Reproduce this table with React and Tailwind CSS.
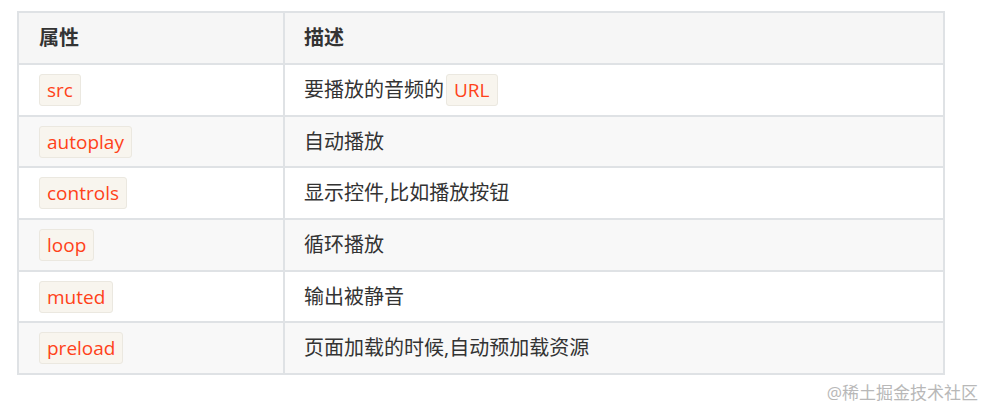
import React from 'react';

const font = { fontFamily: '"Open Sans", "Noto Sans CJK SC", sans-serif' };

const Code = ({ children, className = '' }) => (
  <code
    className={`inline-block rounded-[3px] border border-[#ebe8e0] bg-[#f8f5ee] px-[7px] text-[19px] leading-[30px] text-[#ff4219] ${className}`}
    style={font}
  >
    {children}
  </code>
);

const rows = [
  { attr: 'src', desc: <>要播放的音频的<Code className="ml-[2px]">URL</Code></> },
  { attr: 'autoplay', desc: '自动播放' },
  { attr: 'controls', desc: '显示控件,比如播放按钮' },
  { attr: 'loop', desc: '循环播放' },
  { attr: 'muted', desc: '输出被静音' },
  { attr: 'preload', desc: '页面加载的时候,自动预加载资源' },
];

const App = () => {
  return (
    <div className="relative h-[409px] w-[985px] bg-white pl-[17px] pt-[11px] text-[#333]" style={font}>
      <table className="w-[928px] border-collapse text-[20px]">
        <thead>
          <tr className="bg-[#f6f6f6]">
            <th className="h-[52px] w-[266px] border-2 border-[#dfe2e5] pl-[20px] text-left font-bold">属性</th>
            <th className="h-[52px] border-2 border-[#dfe2e5] pl-[19px] text-left font-bold">描述</th>
          </tr>
        </thead>
        <tbody>
          {rows.map((row, i) => (
            <tr key={row.attr} className={i % 2 === 1 ? 'bg-[#f8f8f8]' : 'bg-white'}>
              <td className="h-[51.7px] border-2 border-[#dfe2e5] pl-[20px]">
                <Code>{row.attr}</Code>
              </td>
              <td className="h-[51.7px] border-2 border-[#dfe2e5] pl-[19px]">{row.desc}</td>
            </tr>
          ))}
        </tbody>
      </table>
      <div className="absolute right-[7px] top-[380px] text-[17px] text-[#b8b8b8]">@稀土掘金技术社区</div>
    </div>
  );
};

export default App;
